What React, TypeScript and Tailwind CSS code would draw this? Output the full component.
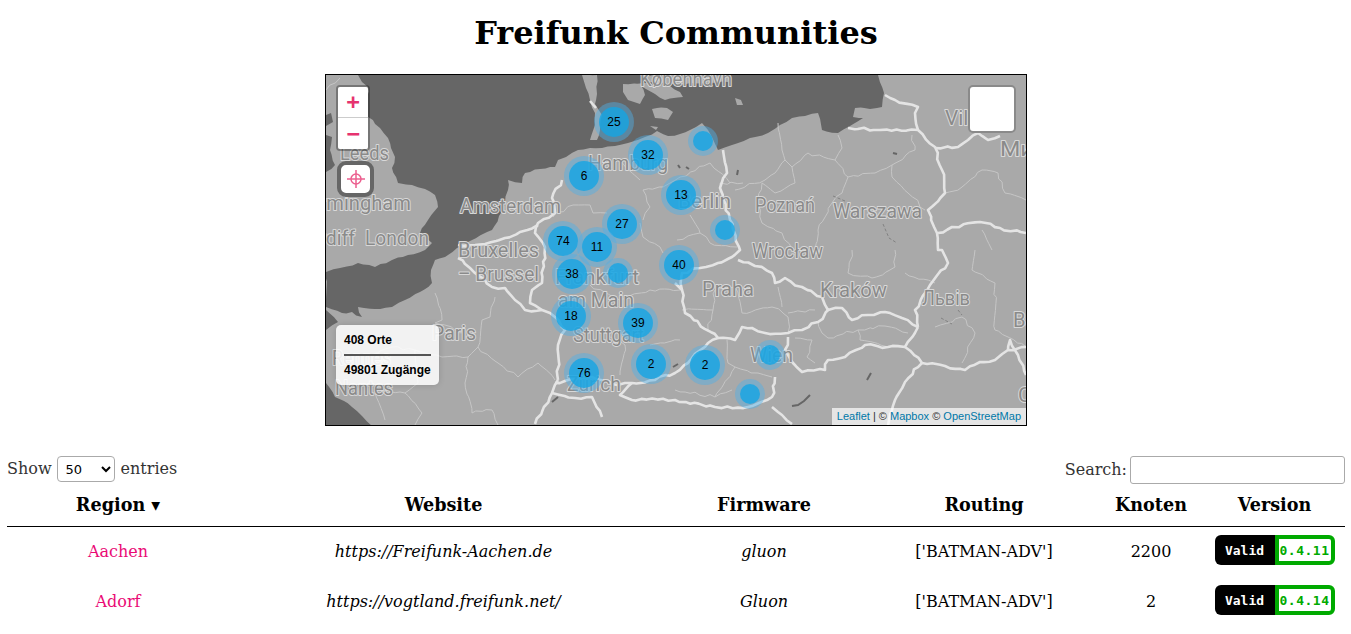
const serif = "font-['DejaVu_Serif',serif]";

// everything on the map is traced in page pixels, viewBox starts at the map's corner
const seas = [
  "358,75 362,82 368,87 368,117 380,128 388,138 391,148 395,157 392,168 398,183 412,185 425,189 435,195 438,207 428,220 420,233 432,243 425,250 408,255 392,260 375,267 358,263 340,268 326,272 326,307 342,313 352,312 362,317 358,307 375,309 392,307 405,300 420,292 432,283 431,270 435,260 445,257 457,248 470,241 492,230 499,216 505,203 508,190 508,180 522,183 525,173 540,169 555,167 558,160 566,157 578,150 590,148 602,148 615,146 628,143 645,137 657,131 668,136 680,134 690,130 702,123 708,130 712,137 718,150 732,145 750,138 768,133 780,125 792,118 805,116 818,113 822,130 838,133 850,126 863,118 853,117 855,108 870,109 882,107 884,93 878,75",
  "326,383 335,397 344,401 352,407 362,416 372,426 326,426",
  "326,115 331,113 333,122 326,126",
  "326,135 332,137 330,150 335,165 326,172",
  "326,310 338,322 326,330",
];
const islands = [
  "582,75 597,75 597,94 595,104 602,115 600,130 597,140 590,140 595,125 595,113 590,100 586,88",
  "623,84 640,84 645,95 640,104 628,100 623,92",
  "637,84 665,84 680,92 683,97 665,100 655,94",
  "652,109 667,108 673,112 668,120 655,118",
  "640,75 730,75 728,82 680,84 650,82",
  "650,126 658,127 656,130",
  "735,98 741,100 743,105 737,105",
];
const lakes = ["792,406 798,405 804,401 810,395", "867,380 871,373", "552,402 558,397", "893,153 897,154", "678,165 680,168", "686,167 689,169", "738,170 737,175", "673,367 678,364"];
const rivers = ["833,196 845,201", "883,224 889,238 897,243", "958,310 962,315", "941,318 952,324"];

const countryBorders = [
  "562,180 552,198 555,213 538,223 535,233 545,247 542,283 532,290 530,303 542,310 555,317 565,330 558,345 558,380",
  "458,245 475,245 505,238 520,232 538,225",
  "458,258 470,268 492,287 505,288 515,300 525,310 542,310",
  "555,383 575,378 592,377 612,384 625,383 632,383 655,380 675,373 688,363 708,343 718,338 685,313 682,290 675,283",
  "682,290 682,273 700,268 718,263 732,257 740,250 730,220 720,188 727,173 723,150",
  "738,260 755,266 772,273 775,283 785,278 802,287 822,297 828,310 842,308 852,320 868,315 885,312 902,318 918,327",
  "828,310 818,322 802,330 788,333 765,333 752,328 742,327 735,340 718,338",
  "788,337 785,350 793,363 802,372 825,370 828,360 845,357 856,350 865,345 888,347 905,347",
  "918,327 905,347 922,363 945,366 965,370 980,362 995,360 1008,350 1026,347",
  "918,327 915,310 930,285 948,263 942,250 938,250 937,233 928,210 945,193 942,170 935,147 918,130 880,130 848,128",
  "918,130 915,113 918,107 895,100 885,95",
  "935,148 958,147 968,140 978,133 988,140 1000,136",
  "938,233 952,227 980,222 1000,228 1026,233",
  "775,377 772,397 748,407 715,407 675,400 632,400 620,395 632,383",
  "772,407 782,415 792,424",
  "922,363 905,382 895,400 888,426",
  "558,380 552,393 535,424",
  "552,393 575,398 592,397 602,417",
  "1008,350 1010,340 1018,355 1026,375",
  "590,101 596,108",
];
const regionBorders = [
  "778,123 782,150 785,160 775,173 765,180 735,190",
  "785,160 792,167 808,153 835,160 842,148 838,135",
  "835,160 848,177 875,173 892,165 915,150 912,135",
  "892,165 892,177 908,193 925,210",
  "848,177 842,193 832,203 818,230 815,250",
  "792,167 795,183 775,193 762,183 758,200 762,223 782,233 792,250",
  "982,170 962,187 945,193",
  "982,170 998,173 1005,193 1026,200",
  "982,230 992,250",
  "852,250 848,273 872,278 895,267 895,250",
  "905,273 935,283",
  "975,250 972,270 995,283 995,330 1026,347",
  "935,327 962,317 975,333 962,363",
  "682,310 713,310 715,290 735,287 742,313 772,307 788,317 788,333",
  "713,310 708,330 718,338",
  "778,287 782,307",
  "788,313 815,310",
  "818,322 822,333 828,338 858,330 885,326 908,333",
  "858,330 860,340 888,347",
  "727,340 728,363 735,367 715,397",
  "735,367 758,373 772,377",
  "675,390 715,397 732,390",
  "795,338 812,340 807,357 815,363",
  "643,190 650,207 643,220",
  "643,190 663,187 680,177 710,163 730,183",
  "690,215 700,233 710,243 737,247",
  "677,240 700,233",
  "640,223 643,237 660,247 663,253",
  "553,217 573,205 590,205 593,213 607,213",
  "743,183 720,183 720,193",
  "590,285 620,300 650,290 680,290",
  "600,330 625,345 620,375",
  "650,345 680,340",
  "620,160 640,180",
  "495,297 490,317 482,320 478,347 498,363 518,377 538,363 555,380",
  "478,347 468,357 465,383 472,413 492,410 498,425",
  "435,293 442,320 435,323 465,333",
  "468,357 442,357 415,350 392,347 368,357",
  "415,350 418,383 405,393 422,413 415,425",
  "405,393 375,393 385,420",
  "326,90 340,78",
];

const cities = [
  { name: "København", x: 640, y: 86, w: 92 },
  { name: "Leeds", x: 340, y: 160, w: 49 },
  { name: "Birmingham", x: 302, y: 210, w: 109 },
  { name: "Cardiff", x: 296, y: 245, w: 59 },
  { name: "London", x: 365, y: 245, w: 64 },
  { name: "Amsterdam", x: 460, y: 213, w: 101 },
  { name: "Bruxelles", x: 458, y: 257, w: 81 },
  { name: "– Brussel", x: 458, y: 281, w: 81 },
  { name: "Hamburg", x: 588, y: 170, w: 80 },
  { name: "Berlin", x: 678, y: 208, w: 53 },
  { name: "Poznań", x: 755, y: 212, w: 60 },
  { name: "Warszawa", x: 833, y: 218, w: 89 },
  { name: "Wrocław", x: 752, y: 258, w: 71 },
  { name: "Praha", x: 702, y: 296, w: 52 },
  { name: "Kraków", x: 820, y: 297, w: 67 },
  { name: "Львів", x: 922, y: 305, w: 48 },
  { name: "Wien", x: 750, y: 362, w: 43 },
  { name: "Frankfurt", x: 555, y: 284, w: 84 },
  { name: "am Main", x: 558, y: 307, w: 76 },
  { name: "Paris", x: 432, y: 340, w: 44 },
  { name: "Stuttgart", x: 573, y: 342, w: 71 },
  { name: "Zürich", x: 567, y: 391, w: 54 },
  { name: "Rennes", x: 332, y: 365, w: 59 },
  { name: "Nantes", x: 335, y: 395, w: 58 },
  { name: "Vilnius", x: 945, y: 125, w: 62 },
  { name: "Минск", x: 1000, y: 156, w: 72 },
  { name: "Bălți", x: 1013, y: 327, w: 40 },
  { name: "Chișinău", x: 1018, y: 402, w: 80 },
];

const clusters = [
  { label: "25", x: 614, y: 122 },
  { label: "32", x: 648, y: 155 },
  { label: "6", x: 584, y: 176 },
  { label: "13", x: 681, y: 195 },
  { label: "", x: 703, y: 141 },
  { label: "27", x: 622, y: 224 },
  { label: "", x: 725, y: 230 },
  { label: "74", x: 563, y: 241 },
  { label: "11", x: 597, y: 247 },
  { label: "38", x: 572, y: 274 },
  { label: "", x: 618, y: 273 },
  { label: "40", x: 679, y: 265 },
  { label: "18", x: 571, y: 316 },
  { label: "39", x: 638, y: 323 },
  { label: "2", x: 651, y: 364 },
  { label: "2", x: 705, y: 365 },
  { label: "", x: 770, y: 355 },
  { label: "76", x: 584, y: 373 },
  { label: "", x: 750, y: 394 },
];

// borders on the tiles are never straight, so break each segment up a little
function jag(points: string, amount: number) {
  const pts = points.split(" ").map((p) => p.split(",").map(Number));
  const out: string[] = [];
  pts.forEach((p, i) => {
    out.push(p.join(","));
    const next = pts[i + 1];
    if (!next) return;
    const steps = Math.floor(Math.hypot(next[0] - p[0], next[1] - p[1]) / 5);
    for (let s = 1; s < steps; s++) {
      const seed = Math.sin(p[0] * 12.9 + p[1] * 78.2 + s * 37.7) * 4375.5;
      const seed2 = Math.sin(p[0] * 39.3 + p[1] * 11.1 + s * 91.3) * 2731.9;
      const dx = (seed - Math.floor(seed) - 0.5) * amount;
      const dy = (seed2 - Math.floor(seed2) - 0.5) * amount;
      const t = s / steps;
      out.push(`${(p[0] + (next[0] - p[0]) * t + dx).toFixed(1)},${(p[1] + (next[1] - p[1]) * t + dy).toFixed(1)}`);
    }
  });
  return out.join(" ");
}

function MapTiles() {
  return (
    <svg viewBox="326 75 700 350" width="700" height="350" className="block bg-[#a9a9a9]">
      {seas.map((s, i) => (
        <polygon key={i} points={jag(s, 2)} fill="#666666" />
      ))}
      {islands.map((s, i) => (
        <polygon key={i} points={jag(s, 2)} fill="#a9a9a9" />
      ))}
      {regionBorders.map((s, i) => (
        <polyline key={i} points={jag(s, 3)} fill="none" stroke="#c6c6c6" strokeWidth="1" />
      ))}
      {lakes.map((s, i) => (
        <polyline key={i} points={s} fill="none" stroke="#666666" strokeWidth="2" />
      ))}
      {rivers.map((s, i) => (
        <polyline key={i} points={s} fill="none" stroke="#777777" strokeWidth="0.8" strokeDasharray="3 2" />
      ))}
      {countryBorders.map((s, i) => (
        <polyline key={i} points={jag(s, 3)} fill="none" stroke="#e4e4e4" strokeWidth="2.6" strokeLinejoin="round" />
      ))}
      {cities.map((c) => (
        <text
          key={c.name}
          x={c.x}
          y={c.y}
          textLength={c.w}
          lengthAdjust="spacingAndGlyphs"
          fontFamily="Roboto, sans-serif"
          fontSize="20"
          fill="#8a8a8a"
          stroke="#d8d8d8"
          strokeWidth="2"
          paintOrder="stroke"
          strokeLinejoin="round"
        >
          {c.name}
        </text>
      ))}
    </svg>
  );
}

function Cluster({ label, x, y }: { label: string; x: number; y: number }) {
  const big = label !== "";
  return (
    <div
      className={`absolute flex items-center justify-center rounded-full bg-[rgba(80,175,230,0.45)] ${big ? "h-10 w-10" : "h-[30px] w-[30px]"}`}
      style={{ left: x - 326 - (big ? 20 : 15), top: y - 75 - (big ? 20 : 15) }}
    >
      <div
        className={`flex items-center justify-center rounded-full bg-[rgba(20,165,228,0.8)] font-['Liberation_Sans',sans-serif] text-[12px] text-black ${big ? "h-[30px] w-[30px]" : "h-5 w-5"}`}
      >
        {label}
      </div>
    </div>
  );
}

function MapBox() {
  return (
    <div className="relative mx-auto h-[352px] w-[702px] overflow-hidden border border-black">
      <MapTiles />
      {clusters.map((c, i) => (
        <Cluster key={i} {...c} />
      ))}

      <div className="absolute left-[10px] top-[10px] overflow-hidden rounded-[4px] border-2 border-[rgba(0,0,0,0.3)] bg-clip-padding">
        <div className="flex h-[31px] w-[30px] items-center justify-center border-b border-[#cccccc] bg-white font-['DejaVu_Sans_Mono',monospace] text-[22px] font-bold leading-none text-[#e6336f]">
          +
        </div>
        <div className="flex h-[31px] w-[30px] items-center justify-center bg-white font-['DejaVu_Sans_Mono',monospace] text-[22px] font-bold leading-none text-[#e6336f]">
          −
        </div>
      </div>

      <div className="absolute left-[11px] top-[86px] flex h-[36px] w-[37px] items-center justify-center rounded-[9px] border-[4px] border-[#666666] bg-white">
        <svg width="20" height="20" viewBox="0 0 20 20" fill="none" stroke="#ec5f8f" strokeWidth="1.5">
          <circle cx="10" cy="10" r="5" />
          <path d="M10 1v18M1 10h18" />
        </svg>
      </div>

      <div className="absolute right-[10px] top-[10px] h-[48px] w-[48px] rounded-[5px] border-2 border-[#8a8a8a] bg-white" />

      <div className="absolute left-[10px] top-[250px] h-[60px] w-[103px] rounded-[5px] bg-[rgba(255,255,255,0.85)] px-2 pt-[8px] font-['Liberation_Sans',sans-serif] text-[12px] font-bold leading-[14px] text-black shadow-[0_0_6px_rgba(0,0,0,0.15)]">
        <div>408 Orte</div>
        <div className="mb-[7px] mt-[7px] h-[2px] bg-[#555555]" />
        <div className="whitespace-nowrap">49801 Zugänge</div>
      </div>

      <div className="absolute bottom-0 right-0 bg-[rgba(255,255,255,0.7)] px-[5px] font-['Liberation_Sans',sans-serif] text-[11px] leading-[17px] text-[#333333]">
        <a className="text-[#0078a8]">Leaflet</a> | © <a className="text-[#0078a8]">Mapbox</a> ©{" "}
        <a className="text-[#0078a8]">OpenStreetMap</a>
      </div>
    </div>
  );
}

function Badge({ version }: { version: string }) {
  return (
    <div className="mx-auto mb-[4px] flex h-[30px] w-[120px] font-['DejaVu_Sans_Mono',monospace] text-[13px] font-bold leading-none">
      <div className="flex w-[60px] items-center justify-center rounded-l-[6px] bg-black text-white">Valid</div>
      <div className="flex w-[60px] items-center justify-center rounded-r-[6px] border-[4px] border-[#00aa00] bg-white tracking-[0.5px] text-[#00aa00]">
        {version}
      </div>
    </div>
  );
}

const rows = [
  { region: "Aachen", website: "https://Freifunk-Aachen.de", firmware: "gluon", knoten: "2200", version: "0.4.11" },
  { region: "Adorf", website: "https://vogtland.freifunk.net/", firmware: "Gluon", knoten: "2", version: "0.4.14" },
];

export default function App() {
  return (
    <div className={`${serif} min-h-[634px] bg-white pl-[7px] pr-[6px] text-black`}>
      <h1 className="pb-[20px] pt-[12px] text-center text-[32px] font-bold leading-[42px]">Freifunk Communities</h1>
      <MapBox />

      <div className="mt-[30px] flex h-[30px] items-start justify-between text-[16px] text-[#333333]">
        <label className="flex items-center gap-[5px]">
          Show
          <select className="mr-[1px] h-[26px] w-[58px] rounded-[4px] border border-[#aaaaaa] bg-white pl-[4px] font-['DejaVu_Sans',sans-serif] text-[13px] text-black">
            <option>50</option>
          </select>
          entries
        </label>
        <label className="flex items-center gap-[3px]">
          Search:
          <input className="h-[28px] w-[215px] rounded-[3px] border border-[#aaaaaa] bg-white" />
        </label>
      </div>

      <table className="w-[1338px] table-fixed border-collapse text-center">
        <colgroup>
          <col className="w-[222px]" />
          <col className="w-[429px]" />
          <col className="w-[212px]" />
          <col className="w-[228px]" />
          <col className="w-[106px]" />
          <col className="w-[141px]" />
        </colgroup>
        <thead>
          <tr className="border-b border-black text-[17.6px] font-bold">
            <th className="h-[40px] pb-[2px]">Region ▾</th>
            <th className="pb-[2px]">Website</th>
            <th className="pb-[2px]">Firmware</th>
            <th className="pb-[2px]">Routing</th>
            <th className="pb-[2px]">Knoten</th>
            <th className="pb-[2px]">Version</th>
          </tr>
        </thead>
        <tbody className="text-[16px]">
          {rows.map((r) => (
            <tr key={r.region} className="h-[50px]">
              <td className="pt-[2px] text-[#ea0a75]">{r.region}</td>
              <td className="pt-[2px] italic">{r.website}</td>
              <td className="pt-[2px] italic">{r.firmware}</td>
              <td className="pt-[2px]">['BATMAN-ADV']</td>
              <td className="pt-[2px]">{r.knoten}</td>
              <td className="pt-[2px]">
                <Badge version={r.version} />
              </td>
            </tr>
          ))}
        </tbody>
      </table>
    </div>
  );
}
